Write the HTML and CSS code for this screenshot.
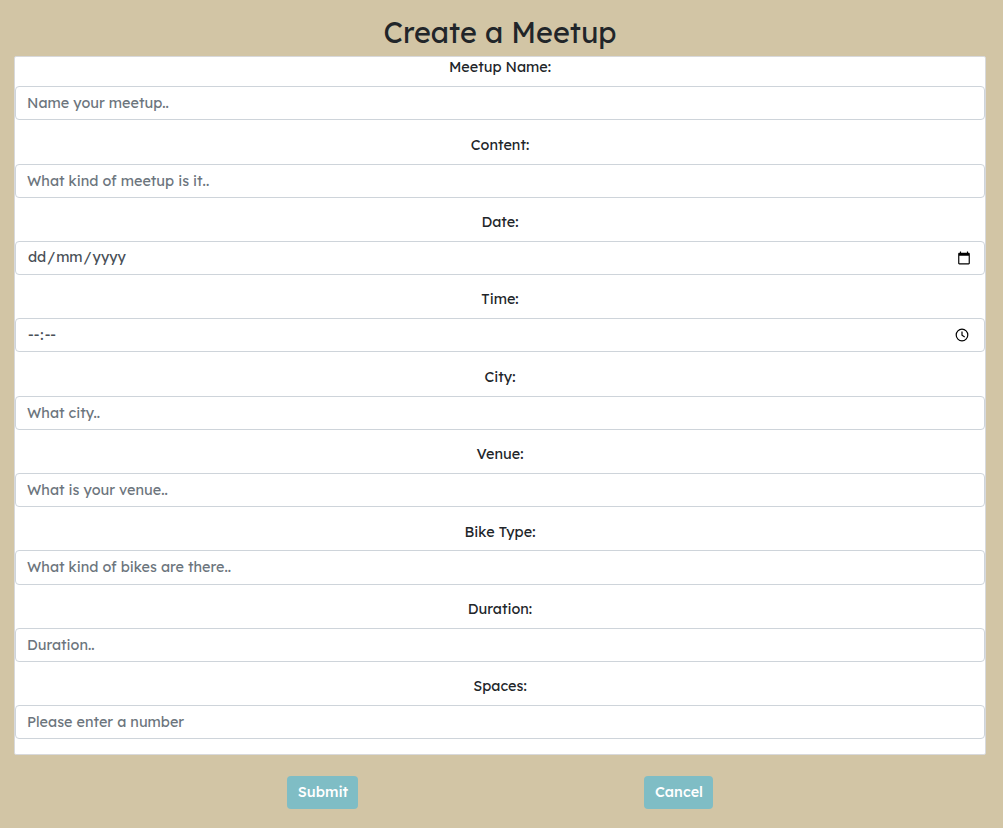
FILE: index.html
```html
<!DOCTYPE html>
<html lang="en">
<head>
<meta charset="utf-8">
<title>Create a Meetup</title>
<link rel="stylesheet" href="styles.css">
</head>
<body>
<main class="page">
<h1 class="title">Create a Meetup</h1>
<form class="form">
<div class="card">
<div class="group"><label class="label">Meetup Name:</label><div class="field"><span>Name your meetup..</span></div></div>
<div class="group"><label class="label">Content:</label><div class="field"><span>What kind of meetup is it..</span></div></div>
<div class="group"><label class="label">Date:</label><div class="field filled"><span class="parts date"><span class="part">dd</span>/<span class="part">mm</span>/<span class="part">yyyy</span></span>
<svg class="icon" viewBox="0 0 24 24"><path d="M20 3h-1V1h-2v2H7V1H5v2H4c-1.1 0-2 .9-2 2v16c0 1.1.9 2 2 2h16c1.1 0 2-.9 2-2V5c0-1.1-.9-2-2-2zm0 18H4V8h16v13z"/></svg></div></div>
<div class="group"><label class="label">Time:</label><div class="field filled"><span class="parts"><span class="part">--</span>:<span class="part">--</span></span>
<svg class="icon clock" viewBox="0 0 16 16"><circle cx="8" cy="8" r="5.8"/><path d="M8 4.6V8.2L10.7 9.9"/></svg></div></div>
<div class="group"><label class="label">City:</label><div class="field"><span>What city..</span></div></div>
<div class="group"><label class="label">Venue:</label><div class="field"><span>What is your venue..</span></div></div>
<div class="group"><label class="label">Bike Type:</label><div class="field"><span>What kind of bikes are there..</span></div></div>
<div class="group"><label class="label">Duration:</label><div class="field"><span>Duration..</span></div></div>
<div class="group"><label class="label">Spaces:</label><div class="field"><span>Please enter a number</span></div></div>
</div>
<div class="actions"><button class="button submit" type="button">Submit</button><button class="button cancel" type="button">Cancel</button></div>
</form>
</main>
</body>
</html>
```
FILE: styles.css
```css
* { box-sizing: border-box; }
body { margin: 0; background: #d2c5a5; color: #212529; font-family: Lexend, "Lexend Deca", Inter, sans-serif; font-size: 14.4px; }
.page { height: 828px; padding: 15px 17px 0 14px; overflow: hidden; }
.title { margin: 0; height: 41px; line-height: 35px; font-size: 28.8px; font-weight: 400; text-align: center; }
.card { height: 699px; padding-top: 0.22px; background: #fff; border: 1px solid #d8d9db; border-radius: 2px; }
.group { height: 77.36px; }
.label { display: block; height: 29px; padding-top: 0.16px; line-height: 21px; text-align: center; }
.field { height: 34.2px; display: flex; align-items: center; justify-content: space-between; padding: 0 13px 0 11px; border: 1px solid #ced4da; border-radius: 4px; background: #fff; color: #6c757d; }
.filled { color: #495057; }
.parts { display: flex; }
.date { padding-bottom: 2px; letter-spacing: -0.04px; }
.part { padding: 0 1px; }
.icon { width: 14px; height: 14px; fill: #000; }
.clock { width: 16px; height: 16px; margin-right: 0.7px; fill: none; stroke: #000; stroke-width: 1.2; }
.actions { display: flex; padding: 21px 0 0 273px; gap: 286px; }
.button { height: 33px; padding: 0 0 1px 1px; border: 0; border-radius: 4px; background: #7fbdc5; color: #fff; font: 500 14.4px Lexend, "Lexend Deca", Inter, sans-serif; }
.submit { width: 71px; }
.cancel { width: 69px; }
```
